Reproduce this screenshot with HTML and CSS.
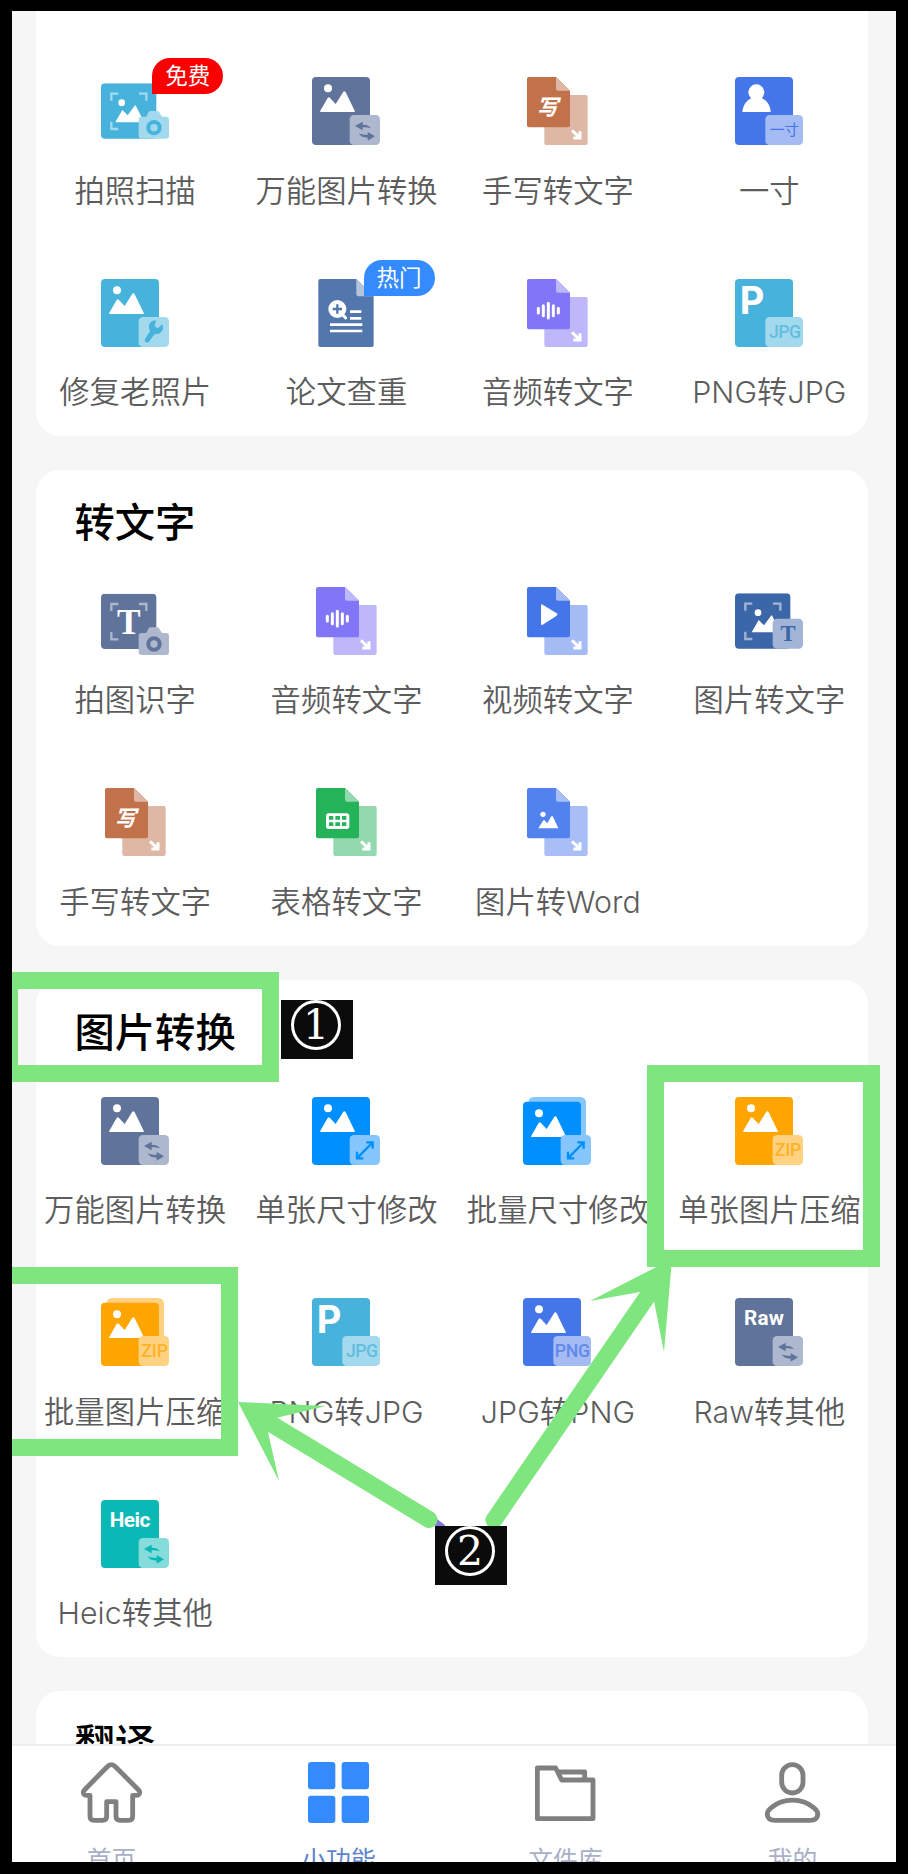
FILE: index.html
```html
<!DOCTYPE html>
<html lang="zh-CN">
<head>
    <meta charset="UTF-8">
    <meta name="viewport" content="width=device-width, initial-scale=1.0">
    <title>小功能</title>
    <link rel="stylesheet" href="styles.css">
</head>
<body>
<!-- shared icon parts, 204 x 204 grid -->
<svg class="defs" aria-hidden="true">
    <symbol id="page" viewBox="0 0 204 204">
        <rect class="main" width="174" height="204" rx="12"/>
    </symbol>
    <symbol id="picture" viewBox="0 0 204 204">
        <circle class="white" cx="48" cy="34" r="12"/>
        <path class="white" d="M26 105Q23 105 25 101L47 63Q50 58 54 63L71 81L93 46Q97 39 101 46L128 101Q130 105 127 105Z"/>
    </symbol>
    <symbol id="photo" viewBox="0 0 204 204">
        <use href="#page"/>
        <use href="#picture"/>
    </symbol>
    <symbol id="photos" viewBox="0 0 204 204">
        <rect class="light" x="16" width="173" height="180" rx="16"/>
        <rect class="main" y="14" width="174" height="190" rx="12"/>
        <use href="#picture" y="15"/>
    </symbol>
    <symbol id="corner" viewBox="0 0 204 204">
        <rect class="light" x="113" y="114" width="91" height="90" rx="13"/>
    </symbol>
    <symbol id="corner-wide" viewBox="0 0 204 204">
        <rect class="light" x="91" y="114" width="113" height="90" rx="13"/>
    </symbol>
    <symbol id="swap" viewBox="0 0 204 204">
        <use href="#corner"/>
        <path class="main" d="M129 147L152 134V143C164 143 172 146 177 154C169 151 162 151 152 151V160Z"/>
        <path class="main" d="M189 178L167 165V174C155 174 148 173 140 169C146 179 154 182 167 182V191Z"/>
    </symbol>
    <symbol id="resize" viewBox="0 0 204 204">
        <use href="#corner"/>
        <path class="main-line" d="M137 182L180 138M163 136H182V155M135 164V184H154"/>
    </symbol>
    <symbol id="frame" viewBox="0 0 204 204">
        <rect class="main" width="166" height="166" rx="12"/>
        <path class="light-line" d="M31 52V31H52M114 31H136V52M31 115V137H52"/>
    </symbol>
    <symbol id="camera" viewBox="0 0 204 204">
        <path class="light" d="M122 119H133Q137 119 139 113L142 106Q144 102 149 102H168Q173 102 175 106L179 113Q181 119 185 119H195Q204 119 204 128V176Q204 185 195 185H122Q113 185 113 176V128Q113 119 122 119Z"/>
        <circle class="main" cx="159" cy="152" r="23"/>
        <circle class="light" cx="159" cy="152" r="11"/>
    </symbol>
    <symbol id="scan-picture" viewBox="0 0 204 204">
        <circle class="white" cx="62" cy="58" r="10"/>
        <path class="white" d="M43 117L64 80L80 96L101 67Q103 64 105 68L126 110V117Z"/>
    </symbol>
    <symbol id="transfer" viewBox="0 0 204 204">
        <rect class="light" x="64" y="54" width="130" height="150" rx="6"/>
        <path class="main" d="M18 0H99L141 41V145Q141 151 135 151H18Q12 151 12 145V6Q12 0 18 0Z"/>
        <path class="light" d="M99 0L141 41H105Q99 41 99 35Z"/>
        <path class="arrow" d="M147 160L170 182M171 163V183H151"/>
    </symbol>
    <symbol id="wave" viewBox="0 0 204 204">
        <path class="wave-line" d="M46 88V102M61 80V110M76 73V117M91 80V110M106 88V102"/>
    </symbol>
</svg>

<div class="screen">
    <main class="list">
        <section class="card card-first">
            <div class="grid">
                <div class="item">
                    <div class="icon cyan">
                        <svg viewBox="0 0 204 204">
                            <use href="#frame" y="19"/>
                            <use href="#scan-picture" y="19"/>
                            <use href="#camera"/>
                        </svg>
                        <span class="tag tag-free">免费</span>
                    </div>
                    <span class="label">拍照扫描</span>
                </div>
                <div class="item">
                    <div class="icon slate">
                        <svg viewBox="0 0 204 204"><use href="#photo"/><use href="#swap"/></svg>
                    </div>
                    <span class="label">万能图片转换</span>
                </div>
                <div class="item">
                    <div class="icon brown">
                        <svg viewBox="0 0 204 204">
                            <use href="#transfer"/>
                            <text class="brush" x="73" y="113">写</text>
                        </svg>
                    </div>
                    <span class="label">手写转文字</span>
                </div>
                <div class="item">
                    <div class="icon blue">
                        <svg viewBox="0 0 204 204">
                            <use href="#page"/>
                            <circle class="white" cx="64" cy="46" r="24"/>
                            <path class="white" d="M22 105C24 82 36 68 52 62H77C93 68 106 82 107 105Z"/>
                            <use href="#corner-wide"/>
                            <text class="size-text" x="148" y="173">一寸</text>
                        </svg>
                    </div>
                    <span class="label">一寸</span>
                </div>
                <div class="item">
                    <div class="icon cyan">
                        <svg viewBox="0 0 204 204">
                            <use href="#photo"/>
                            <use href="#corner"/>
                            <path class="main" d="M165 124L161 142L171 148L184 135C191 153 179 168 161 165L144 188Q138 193 133 188Q130 184 132 179L147 157C138 137 149 124 165 124Z"/>
                        </svg>
                    </div>
                    <span class="label">修复老照片</span>
                </div>
                <div class="item">
                    <div class="icon steel">
                        <svg viewBox="0 0 204 204">
                            <path class="main" d="M25 0H133L185 52V198Q185 204 179 204H25Q19 204 19 198V6Q19 0 25 0Z"/>
                            <path class="light" d="M133 0L185 52H140Q133 52 133 45Z"/>
                            <circle class="white" cx="76" cy="90" r="27"/>
                            <path class="handle" d="M92 107L101 117"/>
                            <path class="plus" d="M76 76V104M62 90H90"/>
                            <path class="lines" d="M114 98H148M114 118H148M54 137H151M54 156H151"/>
                        </svg>
                        <span class="tag tag-hot">热门</span>
                    </div>
                    <span class="label">论文查重</span>
                </div>
                <div class="item">
                    <div class="icon purple">
                        <svg viewBox="0 0 204 204"><use href="#transfer"/><use href="#wave"/></svg>
                    </div>
                    <span class="label">音频转文字</span>
                </div>
                <div class="item">
                    <div class="icon cyan">
                        <svg viewBox="0 0 204 204">
                            <use href="#page"/>
                            <text class="big-p" x="14" y="105">P</text>
                            <use href="#corner-wide"/>
                            <text class="format" x="150" y="177" textLength="96">JPG</text>
                        </svg>
                    </div>
                    <span class="label">PNG转JPG</span>
                </div>
            </div>
        </section>

        <section class="card">
            <h2 class="title">转文字</h2>
            <div class="grid">
                <div class="item">
                    <div class="icon slate">
                        <svg viewBox="0 0 204 204">
                            <use href="#frame" y="20"/>
                            <text class="serif-t" x="83" y="141">T</text>
                            <use href="#camera" y="19"/>
                        </svg>
                    </div>
                    <span class="label">拍图识字</span>
                </div>
                <div class="item">
                    <div class="icon purple">
                        <svg viewBox="0 0 204 204"><use href="#transfer"/><use href="#wave"/></svg>
                    </div>
                    <span class="label">音频转文字</span>
                </div>
                <div class="item">
                    <div class="icon blue">
                        <svg viewBox="0 0 204 204">
                            <use href="#transfer"/>
                            <path class="white" d="M54 56Q54 50 59 53L101 79Q105 82 101 86L59 113Q54 116 54 110Z"/>
                        </svg>
                    </div>
                    <span class="label">视频转文字</span>
                </div>
                <div class="item">
                    <div class="icon navy">
                        <svg viewBox="0 0 204 204">
                            <use href="#frame" y="19"/>
                            <use href="#scan-picture" x="7" y="19"/>
                            <rect class="light" x="113" y="95" width="91" height="90" rx="13"/>
                            <text class="serif-t serif-t-small" x="159" y="162">T</text>
                        </svg>
                    </div>
                    <span class="label">图片转文字</span>
                </div>
                <div class="item">
                    <div class="icon brown">
                        <svg viewBox="0 0 204 204">
                            <use href="#transfer"/>
                            <text class="brush" x="73" y="113">写</text>
                        </svg>
                    </div>
                    <span class="label">手写转文字</span>
                </div>
                <div class="item">
                    <div class="icon green">
                        <svg viewBox="0 0 204 204">
                            <use href="#transfer"/>
                            <rect class="white" x="42" y="76" width="70" height="47" rx="8"/>
                            <path class="main" d="M51 84H64V95H51ZM70 84H84V95H70ZM90 84H103V95H90ZM51 103H64V114H51ZM70 103H84V114H70ZM90 103H103V114H90Z"/>
                        </svg>
                    </div>
                    <span class="label">表格转文字</span>
                </div>
                <div class="item">
                    <div class="icon word">
                        <svg viewBox="0 0 204 204">
                            <use href="#transfer"/>
                            <circle class="white" cx="60" cy="79" r="8"/>
                            <path class="white" d="M46 121L60 98Q63 94 66 98L73 106L84 86Q87 82 90 86L106 121Z"/>
                        </svg>
                    </div>
                    <span class="label">图片转Word</span>
                </div>
            </div>
        </section>

        <section class="card">
            <h2 class="title">图片转换</h2>
            <div class="grid">
                <div class="item">
                    <div class="icon slate">
                        <svg viewBox="0 0 204 204"><use href="#photo"/><use href="#swap"/></svg>
                    </div>
                    <span class="label">万能图片转换</span>
                </div>
                <div class="item">
                    <div class="icon sky">
                        <svg viewBox="0 0 204 204"><use href="#photo"/><use href="#resize"/></svg>
                    </div>
                    <span class="label">单张尺寸修改</span>
                </div>
                <div class="item">
                    <div class="icon sky">
                        <svg viewBox="0 0 204 204"><use href="#photos"/><use href="#resize"/></svg>
                    </div>
                    <span class="label">批量尺寸修改</span>
                </div>
                <div class="item">
                    <div class="icon orange">
                        <svg viewBox="0 0 204 204">
                            <use href="#photo"/>
                            <use href="#corner"/>
                            <text class="format" x="159" y="178" textLength="80">ZIP</text>
                        </svg>
                    </div>
                    <span class="label">单张图片压缩</span>
                </div>
                <div class="item">
                    <div class="icon orange">
                        <svg viewBox="0 0 204 204">
                            <use href="#photos"/>
                            <use href="#corner"/>
                            <text class="format" x="161" y="178" textLength="80">ZIP</text>
                        </svg>
                    </div>
                    <span class="label">批量图片压缩</span>
                </div>
                <div class="item">
                    <div class="icon cyan">
                        <svg viewBox="0 0 204 204">
                            <use href="#page"/>
                            <text class="big-p" x="14" y="105">P</text>
                            <use href="#corner-wide"/>
                            <text class="format" x="150" y="177" textLength="96">JPG</text>
                        </svg>
                    </div>
                    <span class="label">PNG转JPG</span>
                </div>
                <div class="item">
                    <div class="icon blue">
                        <svg viewBox="0 0 204 204">
                            <use href="#photo"/>
                            <use href="#corner-wide"/>
                            <text class="format" x="148" y="178" textLength="106">PNG</text>
                        </svg>
                    </div>
                    <span class="label">JPG转PNG</span>
                </div>
                <div class="item">
                    <div class="icon slate">
                        <svg viewBox="0 0 204 204">
                            <use href="#page"/>
                            <text class="name" x="87" y="80" textLength="120">Raw</text>
                            <use href="#swap"/>
                        </svg>
                    </div>
                    <span class="label">Raw转其他</span>
                </div>
                <div class="item">
                    <div class="icon teal">
                        <svg viewBox="0 0 204 204">
                            <use href="#page"/>
                            <text class="name" x="87" y="81" textLength="122">Heic</text>
                            <use href="#swap"/>
                        </svg>
                    </div>
                    <span class="label">Heic转其他</span>
                </div>
            </div>
        </section>

        <section class="card">
            <h2 class="title">翻译</h2>
        </section>
    </main>

    <nav class="tabs">
        <div class="tab">
            <svg viewBox="0 0 183 183">
                <path class="tab-line" d="M27 100H17C6 100 4 90 11 83L78 15Q91 1 104 15L172 83C179 90 177 100 166 100H155V163Q155 175 143 175H117Q105 175 105 163V119H77V163Q77 175 65 175H39Q27 175 27 163Z"/>
            </svg>
            <span>首页</span>
        </div>
        <div class="tab active">
            <svg viewBox="0 0 183 183">
                <rect width="82" height="82" rx="9"/>
                <rect x="101" width="82" height="82" rx="9"/>
                <rect y="101" width="82" height="82" rx="9"/>
                <rect x="101" y="101" width="82" height="82" rx="9"/>
            </svg>
            <span>小功能</span>
        </div>
        <div class="tab">
            <svg viewBox="0 0 183 183">
                <path class="tab-line" d="M7 18H62L80 54H174V170H7ZM68 30H149V54"/>
            </svg>
            <span>文件库</span>
        </div>
        <div class="tab">
            <svg viewBox="0 0 183 183">
                <rect class="tab-line" x="59" y="8" width="64" height="85" rx="32"/>
                <path class="tab-line" d="M38 175C14 175 8 152 28 137C63 107 120 107 155 137C175 152 169 175 145 175Z"/>
            </svg>
            <span>我的</span>
        </div>
    </nav>
</div>

<!-- tutorial marks drawn over the app -->
<div class="mark mark-title"></div>
<div class="mark mark-single"></div>
<div class="mark mark-batch"></div>
<svg class="arrows" viewBox="0 0 908 1874">
    <path class="stub" d="M430 1518L443 1528"/>
    <path class="shaft" d="M273 1425L429 1519.5M647 1297L494 1520"/>
    <path class="head" d="M238 1402L326 1406L276 1418L268 1432L279 1481Z"/>
    <path class="head" d="M672 1259L590 1301L640 1292L654 1301L664 1352Z"/>
</svg>
<div class="step step-one"><span>1</span></div>
<div class="step step-two"><span>2</span></div>
</body>
</html>
```
FILE: styles.css
```css
* {
    box-sizing: border-box;
}
body {
    position: relative;
    width: 908px;
    height: 1874px;
    margin: 0;
    padding: 11px 12px 12px;
    overflow: hidden;
    background-color: #000;
    font-family: "Noto Sans CJK SC", sans-serif;
}
.defs {
    position: absolute;
    width: 0;
    height: 0;
}
.screen {
    display: flex;
    flex-direction: column;
    height: 1851px;
    overflow: hidden;
    background-color: #f6f6f6;
}
.list {
    display: flex;
    flex-direction: column;
    gap: 33.6px;
    height: 1733px;
    padding: 0 28px 0 24px;
    overflow: hidden;
}
.card {
    flex: none;
    padding: 25px 0 24px;
    border-radius: 24px;
    background-color: #fff;
}
.card-first {
    padding-top: 66px;
    border-radius: 0 0 24px 24px;
}
.title {
    height: 50px;
    margin: 0 0 42px 38.5px;
    font-size: 40.3px;
    font-weight: 500;
    line-height: 50px;
    color: #000;
}
.grid {
    display: grid;
    grid-template-columns: repeat(4, 211.4px);
    row-gap: 68px;
    margin: 0 -7px;
}
.item {
    display: flex;
    flex-direction: column;
    align-items: center;
    gap: 25.6px;
    height: 133.6px;
}
.icon {
    position: relative;
    width: 68px;
    height: 68px;
}
.icon svg {
    display: block;
    width: 68px;
    height: 68px;
}
.label {
    height: 40px;
    padding-left: 1px;
    font-family: Inter, "Noto Sans CJK SC", sans-serif;
    font-size: 30.3px;
    font-weight: 350;
    line-height: 40px;
    letter-spacing: 0.1px;
    white-space: nowrap;
    color: #5c5c5c;
}

/* pills over the icons */
.tag {
    position: absolute;
    top: -19px;
    left: 51.5px;
    width: 71px;
    height: 36px;
    border-radius: 18px 18px 18px 0;
    font-size: 22.5px;
    line-height: 32px;
    text-align: center;
    color: #fff;
}
.tag-free {
    background-color: #fa0000;
}
.tag-hot {
    background-color: #338bff;
}

/* icon colours */
.cyan { --main: #47b3dc; --light: #a3d9ed; }
.slate { --main: #60739b; --light: #adb8ce; }
.brown { --main: #c2724a; --light: #dfb7a5; }
.blue { --main: #4475e9; --light: #a5bbf4; }
.steel { --main: #5277ad; --light: #b5c3dc; }
.purple { --main: #8276f8; --light: #beb8fa; }
.navy { --main: #3b66a8; --light: #a2b5d6; }
.green { --main: #25b35a; --light: #93d8ae; }
.word { --main: #5282ee; --light: #a9bef6; }
.sky { --main: #008fff; --light: #86c6fe; }
.orange { --main: #ffa500; --light: #ffd282; }
.teal { --main: #0ab9b6; --light: #85dcda; }

.main { fill: var(--main); }
.light { fill: var(--light); }
.white { fill: #fff; }
.main-line {
    fill: none;
    stroke: var(--main);
    stroke-width: 7;
}
.light-line {
    fill: none;
    stroke: var(--light);
    stroke-width: 7;
}
.arrow {
    fill: none;
    stroke: #fff;
    stroke-width: 9;
}
.wave-line {
    fill: none;
    stroke: #fff;
    stroke-width: 9;
    stroke-linecap: round;
}
.handle {
    stroke: #fff;
    stroke-width: 9;
    stroke-linecap: round;
}
.plus {
    stroke: var(--main);
    stroke-width: 7;
}
.lines {
    stroke: #fff;
    stroke-width: 8;
}
.brush {
    font-size: 65px;
    font-weight: 700;
    font-style: italic;
    text-anchor: middle;
    fill: #fff;
}
.size-text {
    font-size: 44px;
    text-anchor: middle;
    fill: var(--main);
}
.big-p {
    font-family: Inter, sans-serif;
    font-size: 114px;
    font-weight: 700;
    fill: #fff;
}
.format {
    font-family: Roboto, sans-serif;
    font-size: 53px;
    font-weight: 500;
    text-anchor: middle;
    fill: var(--main);
    opacity: 0.7;
}
.name {
    font-family: Roboto, sans-serif;
    font-size: 62px;
    font-weight: 700;
    text-anchor: middle;
    fill: #fff;
}
.serif-t {
    font-family: "Liberation Serif", serif;
    font-size: 106px;
    font-weight: 700;
    text-anchor: middle;
    fill: #fff;
}
.serif-t-small {
    font-size: 68px;
    fill: var(--main);
}

/* bottom bar */
.tabs {
    display: grid;
    grid-template-columns: repeat(4, 227px);
    height: 118px;
    margin: 0 -14px;
    padding-top: 16px;
    border-top: 2px solid #eee;
    background-color: #fff;
}
.tab {
    display: flex;
    flex-direction: column;
    align-items: center;
    gap: 17px;
    font-size: 24.8px;
    line-height: 36px;
    color: #a9afc6;
}
.tab svg {
    flex: none;
    width: 61px;
    height: 61px;
    fill: #338bff;
}
.tab .tab-line {
    fill: none;
    stroke: #808080;
    stroke-width: 14.5;
    stroke-linejoin: round;
}
.active {
    color: #5c83cc;
}

/* tutorial marks */
.mark {
    position: absolute;
    border: 17px solid #7fe57f;
}
.mark-title {
    top: 972px;
    left: 12px;
    width: 267px;
    height: 110px;
    border-left-width: 6px;
}
.mark-single {
    top: 1065px;
    left: 646.5px;
    width: 233px;
    height: 202px;
}
.mark-batch {
    top: 1267px;
    left: 12px;
    width: 226px;
    height: 189px;
    border-left: none;
}
.arrows {
    position: absolute;
    top: 0;
    left: 0;
    width: 908px;
    height: 1874px;
}
.shaft {
    fill: none;
    stroke: #7fe57f;
    stroke-width: 17;
    stroke-linecap: round;
}
.head {
    fill: #7fe57f;
}
.stub {
    stroke: #8474dc;
    stroke-width: 7;
}
.step {
    position: absolute;
    display: flex;
    justify-content: center;
    width: 72px;
    height: 59px;
    background-color: #0b0b0b;
}
.step span {
    width: 50px;
    height: 50px;
    margin-right: 2px;
    border: 3px solid #fff;
    border-radius: 50%;
    font-family: "DejaVu Serif", serif;
    font-size: 41px;
    line-height: 44px;
    text-align: center;
    color: #fff;
}
.step-one {
    top: 1000px;
    left: 281px;
}
.step-two {
    top: 1526px;
    left: 435px;
}
```
